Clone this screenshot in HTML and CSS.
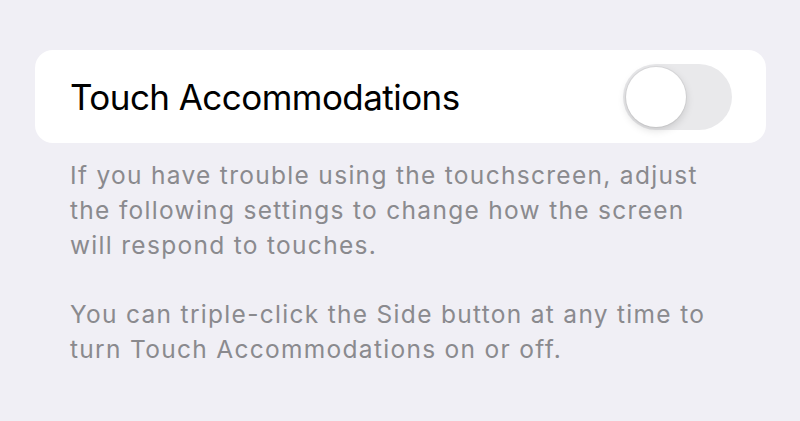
FILE: index.html
```html
<!DOCTYPE html>
<html lang="en">
<head>
  <meta charset="UTF-8" />
  <meta name="viewport" content="width=device-width, initial-scale=1.0"/>
  <title>Touch Accommodations</title>
  <link rel="stylesheet" href="styles.css">
</head>
<body>
  <div class="settings">
    <div class="card">
      <span class="label">Touch Accommodations</span>
      <div class="switch"><div class="knob"></div></div>
    </div>

    <div class="footer">
      <p>If you have trouble using the touchscreen, adjust the following settings to change how the screen will respond to touches.</p>
      <p>You can triple-click the Side button at any time to turn Touch Accommodations on or off.</p>
    </div>
  </div>
</body>
</html>
```

FILE: styles.css
```css
* {
  box-sizing: border-box;
}

body {
  font-family: Inter, 'Noto Sans', sans-serif;
  background: #f0eff5;
  margin: 0;
  padding: 0;
}

.settings {
  padding: 50px 34px 0 35px;
}

.card {
  display: flex;
  align-items: center;
  justify-content: space-between;
  height: 93px;
  background: #fff;
  border-radius: 18px;
  padding: 0 34px 0 35px;
}

.label {
  font-size: 35px;
  color: #000;
  letter-spacing: -0.55px;
}

.switch {
  width: 109px;
  height: 66px;
  border-radius: 33px;
  background: #e9e9eb;
  padding: 3px;
}

.knob {
  width: 60px;
  height: 60px;
  border-radius: 50%;
  background: #fff;
  box-shadow: 0 3px 8px rgba(0,0,0,0.15), 0 0 0 1px rgba(0,0,0,0.05);
}

.footer {
  padding: 15px 55px 0 35px;
  color: #8a8a8e;
  font-size: 24.5px;
  line-height: 35px;
  letter-spacing: 1.3px;
}

.footer p {
  margin: 0 0 34px 0;
}
```
